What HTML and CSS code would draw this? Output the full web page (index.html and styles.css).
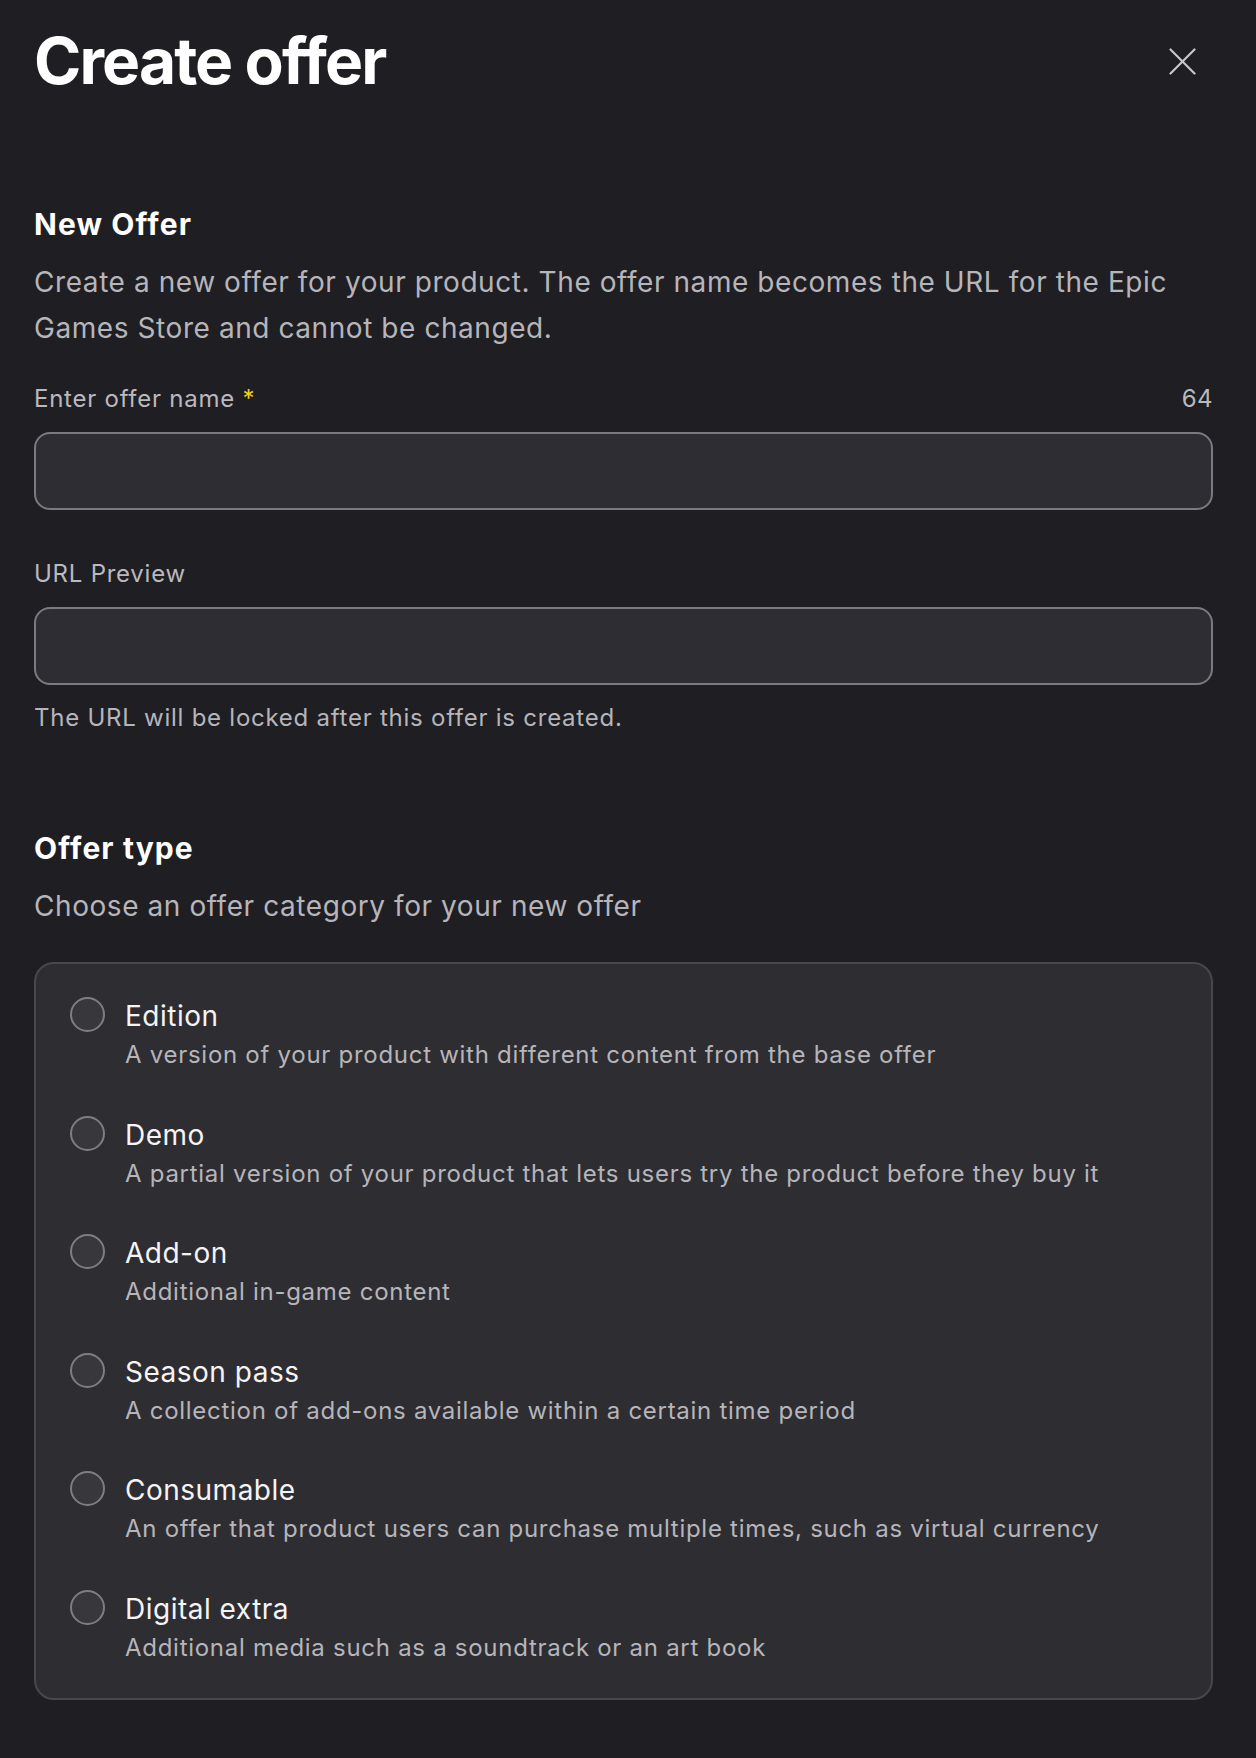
FILE: index.html
```html
<!DOCTYPE html>
<html lang="en">
<head>
<meta charset="utf-8">
<title>Create offer</title>
<link rel="stylesheet" href="styles.css">
</head>
<body>
<div class="page">
  <header class="header">
    <h1 class="title">Create offer</h1>
    <button class="close" aria-label="Close">
      <svg width="27" height="27" viewBox="0 0 27 27" fill="none" stroke="#c9c9cd" stroke-width="2.2" stroke-linecap="round">
        <line x1="1.5" y1="1.5" x2="25.5" y2="25.5"/>
        <line x1="25.5" y1="1.5" x2="1.5" y2="25.5"/>
      </svg>
    </button>
  </header>

  <section class="section first">
    <h2 class="heading">New Offer</h2>
    <p class="lead">Create a new offer for your product. The offer name becomes the URL for the Epic Games Store and cannot be changed.</p>
  </section>

  <div class="field">
    <div class="label-row">
      <span class="label">Enter offer name <span class="req">*</span></span>
      <span class="count">64</span>
    </div>
    <div class="input"></div>
  </div>

  <div class="field second">
    <div class="label-row">
      <span class="label">URL Preview</span>
    </div>
    <div class="input"></div>
    <p class="help">The URL will be locked after this offer is created.</p>
  </div>

  <section class="section types">
    <h2 class="heading">Offer type</h2>
    <p class="lead">Choose an offer category for your new offer</p>
  </section>

  <div class="card">
    <div class="option">
      <span class="radio"></span>
      <div class="option-text">
        <div class="option-title">Edition</div>
        <div class="option-desc">A version of your product with different content from the base offer</div>
      </div>
    </div>
    <div class="option">
      <span class="radio"></span>
      <div class="option-text">
        <div class="option-title">Demo</div>
        <div class="option-desc">A partial version of your product that lets users try the product before they buy it</div>
      </div>
    </div>
    <div class="option">
      <span class="radio"></span>
      <div class="option-text">
        <div class="option-title">Add-on</div>
        <div class="option-desc">Additional in-game content</div>
      </div>
    </div>
    <div class="option">
      <span class="radio"></span>
      <div class="option-text">
        <div class="option-title">Season pass</div>
        <div class="option-desc">A collection of add-ons available within a certain time period</div>
      </div>
    </div>
    <div class="option">
      <span class="radio"></span>
      <div class="option-text">
        <div class="option-title">Consumable</div>
        <div class="option-desc">An offer that product users can purchase multiple times, such as virtual currency</div>
      </div>
    </div>
    <div class="option">
      <span class="radio"></span>
      <div class="option-text">
        <div class="option-title">Digital extra</div>
        <div class="option-desc">Additional media such as a soundtrack or an art book</div>
      </div>
    </div>
  </div>
</div>
</body>
</html>
```

FILE: styles.css
```css
* { box-sizing: border-box; }

html, body {
  margin: 0;
  padding: 0;
  background: #1f1e23;
}

body {
  font-family: "Inter", "Noto Sans", "Liberation Sans", sans-serif;
  color: #b4b3b8;
  min-height: 1758px;
}

.page {
  padding: 21px 43px 0 34px;
}

.header {
  display: flex;
  justify-content: space-between;
  align-items: center;
  height: 80px;
}

.title {
  margin: 0;
  font-size: 64px;
  line-height: 80px;
  font-weight: 700;
  letter-spacing: -1.9px;
  color: #ffffff;
}

.close {
  display: flex;
  align-items: center;
  justify-content: center;
  width: 27px;
  height: 27px;
  margin-right: 17px;
  padding: 0;
  border: 0;
  background: none;
}

.section.first { margin-top: 105px; }
.section.types { margin-top: 96px; }

.heading {
  margin: 0;
  font-size: 30px;
  line-height: 36px;
  font-weight: 700;
  letter-spacing: 1.1px;
  color: #ffffff;
}

.lead {
  margin: 17px 0 0;
  font-size: 28px;
  line-height: 46px;
  letter-spacing: 0.57px;
  color: #b6b5ba;
}

.field { margin-top: 32px; }
.field.second { margin-top: 48px; }

.label-row {
  display: flex;
  justify-content: space-between;
  align-items: baseline;
  font-size: 24px;
  line-height: 32px;
  letter-spacing: 0.75px;
  color: #bab9be;
}

.req { color: #f2d01e; }

.count { letter-spacing: 0.4px; }

.input {
  margin-top: 17px;
  height: 78px;
  border: 2px solid #7b7a80;
  border-radius: 16px;
  background: #2e2d33;
}

.help {
  margin: 17px 0 0;
  font-size: 24px;
  line-height: 32px;
  letter-spacing: 0.75px;
  color: #b6b5ba;
}

.card {
  margin-top: 33px;
  border: 2px solid #48474d;
  border-radius: 20px;
  background: #2e2d32;
  padding: 32px 34px 31px;
  display: flex;
  flex-direction: column;
  gap: 40.5px;
}

.option {
  display: flex;
  align-items: flex-start;
  gap: 20px;
}

.radio {
  flex: none;
  width: 35px;
  height: 35px;
  margin-top: 1px;
  border: 2px solid #7e7d83;
  border-radius: 50%;
  background: #38373c;
}

.option-title {
  font-size: 28px;
  line-height: 40px;
  letter-spacing: 0.5px;
  color: #f4f4f5;
}

.option-desc {
  font-size: 24px;
  line-height: 38px;
  letter-spacing: 0.72px;
  color: #b6b5ba;
}
```
